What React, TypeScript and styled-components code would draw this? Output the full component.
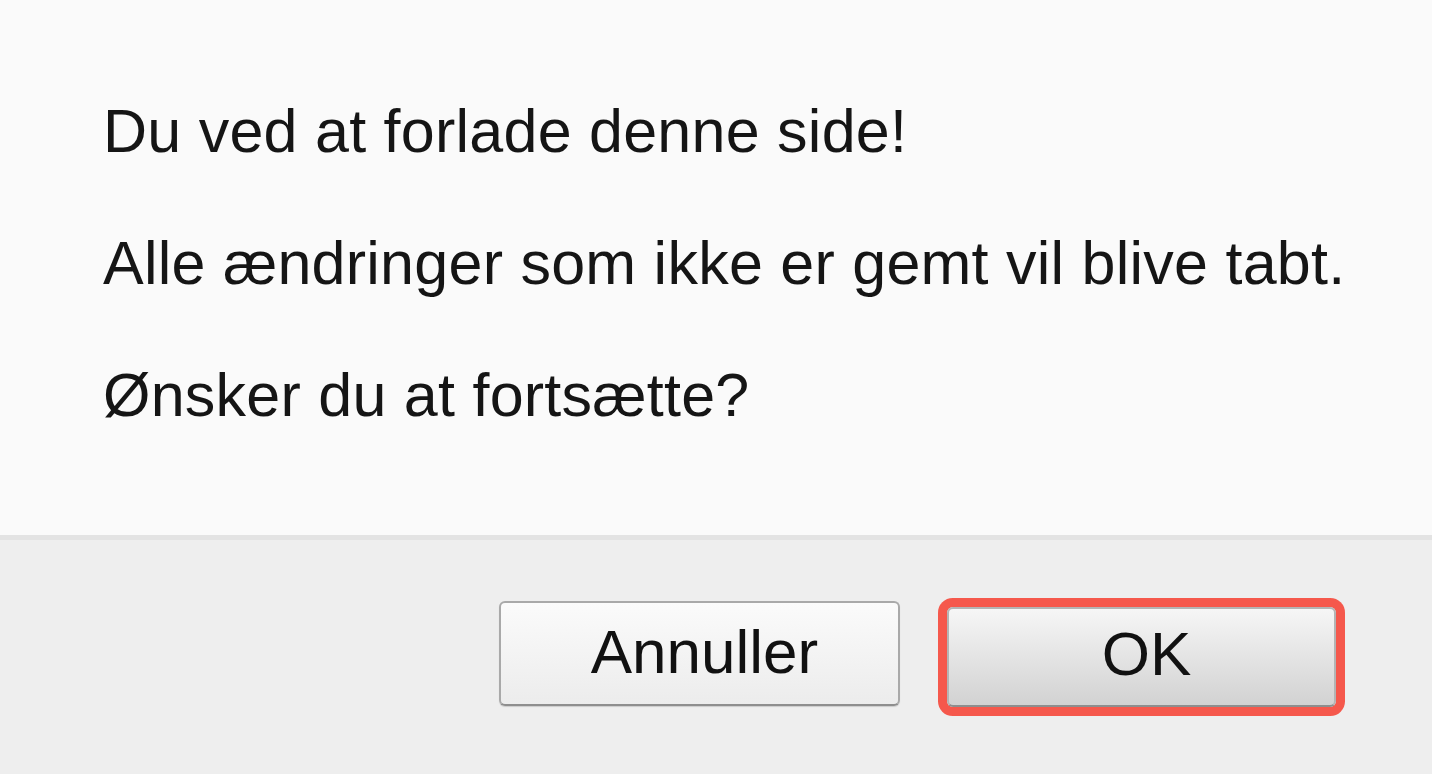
import React, { FC } from 'react';
import styled, { createGlobalStyle } from 'styled-components';

const GlobalStyle = createGlobalStyle`
	html, body {
		margin: 0;
		padding: 0;
		background: #eeeeee;
		font-family: "Liberation Sans", Arial, sans-serif;
	}
`;

const App: FC = () => {
	return (
		<>
			<GlobalStyle />
			<Dialog>
				<Message>
					<p>Du ved at forlade denne side!</p>
					<p>Alle ændringer som ikke er gemt vil blive tabt.</p>
					<p>Ønsker du at fortsætte?</p>
				</Message>
				<Footer>
					<Button>Annuller</Button>
					<Button primary>OK</Button>
				</Footer>
			</Dialog>
		</>
	);
};

export default App;

const Dialog = styled.div`
	display: flex;
	flex-direction: column;
	width: 1432px;
	height: 774px;
	overflow: hidden;
`;

const Message = styled.div`
	height: 540px;
	box-sizing: border-box;
	padding: 95px 0 0 103px;
	background: #fafafa;
	border-bottom: 5px solid #e3e3e3;
	p {
		margin: 0 0 60px;
		font-size: 61px;
		letter-spacing: 0.25px;
		line-height: 72px;
		color: #151515;
		white-space: nowrap;
	}
`;

const Footer = styled.div`
	flex: 1;
	display: flex;
	justify-content: flex-end;
	align-items: flex-start;
	gap: 47px;
	padding: 61px 96px 0 0;
	background: #eeeeee;
`;

const Button = styled.button<{ primary?: boolean }>`
	box-sizing: border-box;
	width: ${(p) => (p.primary ? '389px' : '401px')};
	height: ${(p) => (p.primary ? '100px' : '105px')};
	margin-top: ${(p) => (p.primary ? '6px' : '0')};
	border: 2px solid ${(p) => (p.primary ? '#b4b4b4' : '#a9a9a9')};
	border-bottom-color: #8e8e8e;
	border-radius: 6px;
	background: ${(p) =>
		p.primary
			? 'linear-gradient(#f6f6f6, #d2d2d2)'
			: 'linear-gradient(#fbfbfb, #ececec)'};
	box-shadow: ${(p) => (p.primary ? '0 0 0 9px #f5584c' : '0 1px 1px rgba(0,0,0,0.15)')};
	font-family: "Liberation Sans", Arial, sans-serif;
	font-size: 62px;
	color: #111;
	padding: 0 0 ${(p) => (p.primary ? '8px' : '4px')} 10px;
	cursor: pointer;
`;
